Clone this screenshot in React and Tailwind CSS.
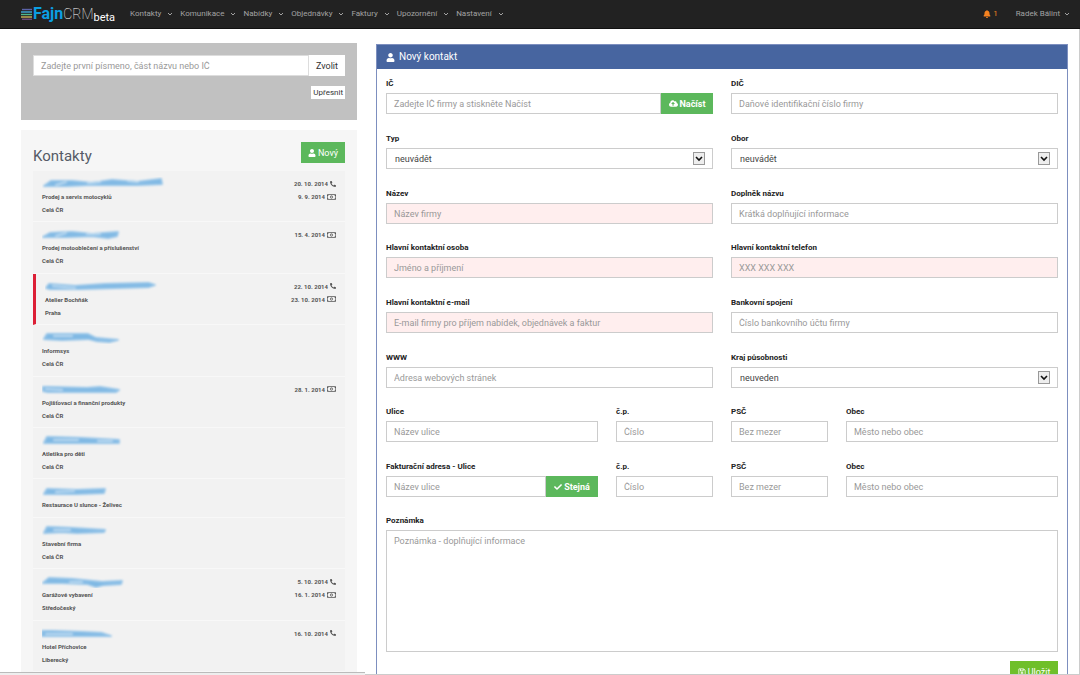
import React from 'react';
import { FaBell, FaCheck, FaCloudUploadAlt, FaPhoneAlt, FaRegMoneyBillAlt, FaRegSave, FaUser } from 'react-icons/fa';

const menu = ['Kontakty', 'Komunikace', 'Nabídky', 'Objednávky', 'Faktury', 'Upozornění', 'Nastavení'];

// name is the hand-smudged stroke over the company name: [outline path, highlight path]
const contacts = [
  {
    name: ['M2 9 L9 4 L30 4 L50 6 L70 3 L95 5 L119 2 L120 7 L95 8 L70 8 L45 8 L25 9 Z', 'M46 6 L58 5 M86 4 L96 5 M14 8 L24 5'],
    lines: ['Prodej a servis motocyklů', 'Celá ČR'],
    dates: [['20. 10. 2014', 'phone'], ['9. 9. 2014', 'money']],
  },
  {
    name: ['M1 9 L8 5 L30 4 L50 6 L76 4 L75 8 L66 10 L50 8 L25 9 Z', 'M45 6 L58 6 M14 8 L24 5'],
    lines: ['Prodej motooblečení a příslušenství', 'Celá ČR'],
    dates: [['15. 4. 2014', 'money']],
  },
  {
    name: ['M1 8 L4 4 L30 6 L60 4 L104 3 L110 5 L104 7 L70 8 L35 9 L4 9 Z', 'M8 6 L30 8'],
    lines: ['Atelier Bochňák', 'Praha'],
    dates: [['22. 10. 2014', 'phone'], ['23. 10. 2014', 'money']],
    active: true,
  },
  {
    name: ['M2 8 L5 3 L46 3 L54 7 L76 9 L68 11 L54 10 L46 8 L20 9 Z', 'M12 5 L30 5'],
    lines: ['Informsys', 'Celá ČR'],
    dates: [],
  },
  {
    name: ['M1 4 L6 4 L45 5 L58 4 L77 7 L74 9 L40 9 L6 9 L1 8 Z', 'M4 6 L20 7'],
    lines: ['Pojišťovací a finanční produkty', 'Celá ČR'],
    dates: [['28. 1. 2014', 'money']],
  },
  {
    name: ['M2 9 L5 3 L40 4 L77 6 L77 9 L50 9 L25 9 Z', 'M12 6 L36 6 M56 7 L70 7'],
    lines: ['Atletika pro děti', 'Celá ČR'],
    dates: [],
  },
  {
    name: ['M2 9 L5 4 L35 5 L63 4 L62 8 L35 9 Z', 'M14 7 L32 6'],
    lines: ['Restaurace U slunce - Želivec'],
    dates: [],
  },
  {
    name: ['M2 9 L5 3 L30 4 L63 6 L62 8 L35 9 L20 8 Z', 'M12 6 L28 6'],
    lines: ['Stavební firma', 'Celá ČR'],
    dates: [],
  },
  {
    name: ['M1 8 L7 3 L30 4 L60 7 L80 6 L79 9 L62 10 L54 12 L45 9 L20 8 Z', 'M28 7 L40 7'],
    lines: ['Garážové vybavení', 'Středočeský'],
    dates: [['5. 10. 2014', 'phone'], ['16. 1. 2014', 'money']],
  },
  {
    name: ['M0 4 L10 4 L40 5 L60 6 L69 9 L40 9 L0 9 Z', 'M4 7 L30 7'],
    lines: ['Hotel Příchovice', 'Liberecký'],
    dates: [['16. 10. 2014', 'phone']],
  },
];

const Chevron = () => (
  <svg viewBox="0 0 6 6" className="size-[6px]" fill="none" stroke="currentColor">
    <path d="M1 2 L3 4 L5 2" />
  </svg>
);

const Logo = () => (
  <a href="#" className="flex items-center w-[109px] shrink-0">
    <svg viewBox="0 0 12 12" className="size-3 shrink-0">
      <path d="M1 1.5H11" stroke="#5b63a8" strokeWidth="1.4" />
      <path d="M0 4H11" stroke="#3fa9dc" strokeWidth="1.4" />
      <path d="M0 6.5H11" stroke="#4fb88a" strokeWidth="1.4" />
      <path d="M0 9H11" stroke="#c9b458" strokeWidth="1.4" />
      <path d="M1 11.2H11" stroke="#8a5a9c" strokeWidth="1" />
    </svg>
    <span className="text-base leading-4 font-bold text-[#0b9fe3]">Fajn</span>
    <span className="text-sm leading-4 font-thin text-white">CRM</span>
    <span className="pt-2 text-[11px] leading-3 text-white">beta</span>
  </a>
);

const NavBar = () => (
  <header className="flex h-[29px] shrink-0 items-center border-b border-[#111] bg-[#222] pl-[21px] pr-[10px] text-[8px] text-[#a3a3a3]">
    <Logo />
    <nav className="flex gap-[7px]">
      {menu.map((item) => (
        <a key={item} href="#" className="flex items-center gap-[6px]">
          {item}
          <Chevron />
        </a>
      ))}
    </nav>
    <a href="#" className="ml-auto flex items-center gap-[2px] text-[#f58220]">
      <FaBell />1
    </a>
    <a href="#" className="ml-[18px] flex items-center gap-1">
      Radek Bálint
      <Chevron />
    </a>
  </header>
);

const SearchBox = () => (
  <form className="h-[77px] shrink-0 bg-[#c1c1c1] px-3 pt-3">
    <div className="flex h-[21px] text-[9px]">
      <input
        aria-label="Hledat kontakt"
        placeholder="Zadejte první písmeno, část názvu nebo IČ"
        className="min-w-0 flex-1 border border-[#ddd] bg-white px-[7px] placeholder:text-[#999]"
      />
      <button type="button" className="w-9 bg-white text-[#333]">Zvolit</button>
    </div>
    <div className="mt-[10px] flex justify-end">
      <button type="button" className="h-[13px] bg-white px-[2px] text-[#333]">Upřesnit</button>
    </div>
  </form>
);

const Contact = ({ contact }) => (
  <li
    className={`flex grow justify-between border-b border-b-[#f8f8f8] bg-[#f2f2f2] px-[9px] pt-[6px] pb-[5px] text-[6px] leading-[13px] font-bold text-[#555] ${
      contact.active ? 'border-l-[3px] border-l-[#dc1f36]' : ''
    }`}
  >
    <div>
      <a href="#" aria-label={contact.lines[0]} className="flex h-[13px] items-center">
        <svg viewBox="0 0 124 13" className="h-[13px] w-[124px]">
          <g filter="url(#smudge)">
            <path d={contact.name[0]} fill="#7db7e3" stroke="#93c3e8" strokeWidth="1.8" strokeLinejoin="round" />
            <path d={contact.name[1]} fill="none" stroke="#b8d8f0" strokeWidth="2" strokeLinecap="round" />
          </g>
        </svg>
      </a>
      {contact.lines.map((line) => (
        <p key={line}>{line}</p>
      ))}
    </div>
    <div>
      {contact.dates.map(([date, type]) => (
        <p key={date} className="flex items-center justify-end gap-[2px]">
          {date}
          {type === 'phone' ? <FaPhoneAlt className="size-[6px]" /> : <FaRegMoneyBillAlt className="h-2 w-[9px]" />}
        </p>
      ))}
    </div>
  </li>
);

const ContactList = () => (
  <section className="mt-[10px] flex min-h-0 flex-1 flex-col bg-[#f6f6f6] px-3 pt-3">
    <svg className="absolute size-0">
      <filter id="smudge" x="-5%" y="-50%" width="110%" height="200%">
        <feGaussianBlur stdDeviation="0.8" />
      </filter>
    </svg>
    <div className="flex h-[29px] shrink-0 items-start justify-between">
      <h2 className="pt-1 text-[15px] leading-5 text-[#555b66]">Kontakty</h2>
      <button type="button" className="flex h-[21px] w-11 items-center justify-center gap-[2px] bg-[#5cb85c] text-[9px] text-white">
        <FaUser className="size-2" /> Nový
      </button>
    </div>
    <ul className="flex flex-1 flex-col">
      {contacts.map((contact) => (
        <Contact key={contact.lines[0]} contact={contact} />
      ))}
    </ul>
  </section>
);

const Field = ({ id, label, span = 'col-span-6', children }) => (
  <div className={span}>
    <label htmlFor={id} className="mb-[3px] block leading-3 font-bold text-[#222]">{label}</label>
    <div className="flex text-[9px]">{children}</div>
  </div>
);

const TextField = ({ id, label, placeholder, span, required, children }) => (
  <Field id={id} label={label} span={span}>
    <input
      id={id}
      placeholder={placeholder}
      className={`h-[21px] w-0 min-w-0 grow border border-[#ccc] px-[7px] placeholder:text-[#999] ${required ? 'bg-[#ffeeee]' : 'bg-white'}`}
    />
    {children}
  </Field>
);

const SelectField = ({ id, label, value }) => (
  <Field id={id} label={label}>
    <div className="relative grow">
      <select id={id} className="h-[21px] w-full appearance-none border border-[#ccc] bg-white px-2 text-[#444]">
        <option>{value}</option>
      </select>
      <svg viewBox="0 0 12 13" className="pointer-events-none absolute top-1 right-2 h-[13px] w-3" fill="none">
        <rect x="0.5" y="0.5" width="11" height="12" fill="#eee" stroke="#999" />
        <path d="M3 5 L6 8 L9 5" stroke="#111" strokeWidth="1.6" />
      </svg>
    </div>
  </Field>
);

const AddonButton = ({ icon, children }) => (
  <button type="button" className="flex h-[21px] w-[52px] items-center justify-center gap-[2px] bg-[#5cb85c] font-bold text-white">
    {icon}
    {children}
  </button>
);

const FormSection = ({ children }) => (
  <div className="grid grid-cols-12 gap-x-[18px] gap-y-[19px]">{children}</div>
);

const ContactForm = () => (
  <form className="border border-[#7d8fbf] bg-white">
    <h1 className="flex h-6 items-center gap-1 bg-[#4765a0] px-[9px] text-[10px] text-white">
      <FaUser className="size-[9px]" /> Nový kontakt
    </h1>
    <div className="flex flex-col gap-[18px] px-[9px] pt-[9px] pb-3">
      <FormSection>
        <TextField id="ic" label="IČ" placeholder="Zadejte IČ firmy a stiskněte Načíst">
          <AddonButton icon={<FaCloudUploadAlt className="size-[9px]" />}>Načíst</AddonButton>
        </TextField>
        <TextField id="dic" label="DIČ" placeholder="Daňové identifikační číslo firmy" />
        <SelectField id="typ" label="Typ" value="neuvádět" />
        <SelectField id="obor" label="Obor" value="neuvádět" />
        <TextField id="nazev" label="Název" placeholder="Název firmy" required />
        <TextField id="doplnek" label="Doplněk názvu" placeholder="Krátká doplňující informace" />
      </FormSection>
      <FormSection>
        <TextField id="osoba" label="Hlavní kontaktní osoba" placeholder="Jméno a příjmení" required />
        <TextField id="telefon" label="Hlavní kontaktní telefon" placeholder="XXX XXX XXX" required />
        <TextField id="email" label="Hlavní kontaktní e-mail" placeholder="E-mail firmy pro příjem nabídek, objednávek a faktur" required />
        <TextField id="banka" label="Bankovní spojení" placeholder="Číslo bankovního účtu firmy" />
        <TextField id="www" label="WWW" placeholder="Adresa webových stránek" />
        <SelectField id="kraj" label="Kraj působnosti" value="neuveden" />
      </FormSection>
      <FormSection>
        <TextField id="ulice" label="Ulice" placeholder="Název ulice" span="col-span-4" />
        <TextField id="cp" label="č.p." placeholder="Číslo" span="col-span-2" />
        <TextField id="psc" label="PSČ" placeholder="Bez mezer" span="col-span-2" />
        <TextField id="obec" label="Obec" placeholder="Město nebo obec" span="col-span-4" />
        <TextField id="f-ulice" label="Fakturační adresa - Ulice" placeholder="Název ulice" span="col-span-4">
          <AddonButton icon={<FaCheck className="size-2" />}>Stejná</AddonButton>
        </TextField>
        <TextField id="f-cp" label="č.p." placeholder="Číslo" span="col-span-2" />
        <TextField id="f-psc" label="PSČ" placeholder="Bez mezer" span="col-span-2" />
        <TextField id="f-obec" label="Obec" placeholder="Město nebo obec" span="col-span-4" />
      </FormSection>
      <div>
        <Field id="poznamka" label="Poznámka">
          <textarea
            id="poznamka"
            placeholder="Poznámka - doplňující informace"
            className="h-[122px] grow resize-none border border-[#ccc] px-[7px] py-1 placeholder:text-[#999]"
          />
        </Field>
        <div className="mt-[9px] flex justify-end">
          <button type="button" className="flex h-[21px] w-12 items-center justify-center gap-[2px] bg-[#6fbf2a] text-[9px] text-white">
            <FaRegSave className="size-2" /> Uložit
          </button>
        </div>
      </div>
    </div>
  </form>
);

const App = () => {
  return (
    <div className="flex h-screen flex-col overflow-hidden bg-[#eee] font-[Roboto,sans-serif] text-[8px] leading-3">
      <NavBar />
      <main className="grid min-h-0 flex-1 grid-cols-[minmax(0,365fr)_minmax(0,715fr)]">
        <div className="mb-[2px] flex min-h-0 flex-col border-b border-[#bbb] bg-white pt-[14px] pr-2 pl-[21px]">
          <SearchBox />
          <ContactList />
        </div>
        <div className="min-h-0 overflow-hidden border-r border-b border-[#ccc] bg-white pt-[15px] pr-[11px] pl-[11px]">
          <ContactForm />
        </div>
      </main>
    </div>
  );
};

export default App;
